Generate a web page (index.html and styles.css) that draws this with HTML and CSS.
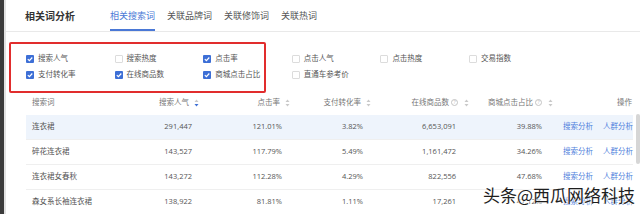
FILE: index.html
```html
<!DOCTYPE html>
<html lang="zh-CN">
<head>
<meta charset="utf-8">
<title>相关词分析</title>
<link rel="stylesheet" href="styles.css">
</head>
<body>
<div class="shell">
  <div class="rail"></div>
  <main class="page">
    <header class="topbar">
      <h1 class="title">相关词分析</h1>
      <nav class="tabs">
        <a class="tab active">相关搜索词</a>
        <a class="tab">关联品牌词</a>
        <a class="tab">关联修饰词</a>
        <a class="tab">关联热词</a>
      </nav>
    </header>

    <section class="filters">
      <label class="opt"><span class="cb on"><svg viewBox="0 0 8 8"><path d="M1.8 4.1 3.4 5.6 6.3 2.5"/></svg></span>搜索人气</label>
      <label class="opt"><span class="cb"></span>搜索热度</label>
      <label class="opt"><span class="cb on"><svg viewBox="0 0 8 8"><path d="M1.8 4.1 3.4 5.6 6.3 2.5"/></svg></span>点击率</label>
      <label class="opt"><span class="cb"></span>点击人气</label>
      <label class="opt"><span class="cb"></span>点击热度</label>
      <label class="opt"><span class="cb"></span>交易指数</label>
      <label class="opt"><span class="cb on"><svg viewBox="0 0 8 8"><path d="M1.8 4.1 3.4 5.6 6.3 2.5"/></svg></span>支付转化率</label>
      <label class="opt"><span class="cb on"><svg viewBox="0 0 8 8"><path d="M1.8 4.1 3.4 5.6 6.3 2.5"/></svg></span>在线商品数</label>
      <label class="opt"><span class="cb on"><svg viewBox="0 0 8 8"><path d="M1.8 4.1 3.4 5.6 6.3 2.5"/></svg></span>商城点击占比</label>
      <label class="opt"><span class="cb"></span>直通车参考价</label>
    </section>

    <div class="table">
      <div class="row head">
        <div class="hc first">搜索词</div>
        <div class="hc">搜索人气<svg class="sort" viewBox="0 0 5 8"><path class="up" d="M2.5 0.5 4.5 3H0.5Z"/><path class="dn active" d="M2.5 7.5 4.5 5H0.5Z"/></svg></div>
        <div class="hc">点击率<svg class="sort" viewBox="0 0 5 8"><path class="up" d="M2.5 0.5 4.5 3H0.5Z"/><path class="dn" d="M2.5 7.5 4.5 5H0.5Z"/></svg></div>
        <div class="hc">支付转化率<svg class="sort" viewBox="0 0 5 8"><path class="up" d="M2.5 0.5 4.5 3H0.5Z"/><path class="dn" d="M2.5 7.5 4.5 5H0.5Z"/></svg></div>
        <div class="hc">在线商品数<span class="help">?</span><svg class="sort" viewBox="0 0 5 8"><path class="up" d="M2.5 0.5 4.5 3H0.5Z"/><path class="dn" d="M2.5 7.5 4.5 5H0.5Z"/></svg></div>
        <div class="hc">商城点击占比<span class="help">?</span><svg class="sort" viewBox="0 0 5 8"><path class="up" d="M2.5 0.5 4.5 3H0.5Z"/><path class="dn" d="M2.5 7.5 4.5 5H0.5Z"/></svg></div>
        <div class="hc">操作</div>
      </div>

      <div class="row hl">
        <div class="c first">连衣裙</div>
        <div class="c v2">291,447</div>
        <div class="c v3">121.01%</div>
        <div class="c v4">3.82%</div>
        <div class="c v5">6,653,091</div>
        <div class="c v6">39.88%</div>
        <div class="c ops"><a>搜索分析</a><a>人群分析</a></div>
      </div>
      <div class="row">
        <div class="c first">碎花连衣裙</div>
        <div class="c v2">143,527</div>
        <div class="c v3">117.79%</div>
        <div class="c v4">5.49%</div>
        <div class="c v5">1,161,472</div>
        <div class="c v6">34.26%</div>
        <div class="c ops"><a>搜索分析</a><a>人群分析</a></div>
      </div>
      <div class="row">
        <div class="c first">连衣裙女春秋</div>
        <div class="c v2">143,272</div>
        <div class="c v3">112.28%</div>
        <div class="c v4">4.29%</div>
        <div class="c v5">822,556</div>
        <div class="c v6">47.68%</div>
        <div class="c ops"><a>搜索分析</a><a>人群分析</a></div>
      </div>
      <div class="row">
        <div class="c first">森女系长袖连衣裙</div>
        <div class="c v2">138,922</div>
        <div class="c v3">81.81%</div>
        <div class="c v4">1.11%</div>
        <div class="c v5">17,261</div>
        <div class="c v6">47.12%</div>
        <div class="c ops"><a>搜索分析</a><a>人群分析</a></div>
      </div>
    </div>
  </main>
</div>
<div class="mark"></div>
<div class="scrollthumb"></div>
<div class="wm">头条@西瓜网络科技</div>
</body>
</html>
```

FILE: styles.css
```css
* { box-sizing: border-box; margin: 0; padding: 0; }

html, body {
  width: 640px;
  height: 214px;
  overflow: hidden;
  background: #ffffff;
}

body {
  position: relative;
  font-family: "Open Sans", "Noto Sans CJK SC", sans-serif;
  font-size: 7.5px;
  line-height: 1;
  color: #555;
}

.shell {
  display: flex;
  height: 214px;
}

.rail {
  width: 4px;
  flex: none;
  background: #3b3b3b;
}

.page {
  flex: 1;
  border-left: 2px solid #e2e2e2;
  background: #fff;
}

/* top bar */
.topbar {
  display: flex;
  align-items: stretch;
  height: 32px;
  border-bottom: 1px solid #e9e9e9;
  padding-left: 19px;
}

.title {
  display: flex;
  align-items: center;
  font-size: 10px;
  font-weight: 700;
  color: #333;
  margin-right: 35px;
  padding-top: 1px;
}

.tabs {
  display: flex;
  gap: 12px;
}

.tab {
  display: flex;
  align-items: center;
  font-size: 9px;
  color: #555;
  border-bottom: 2px solid transparent;
  padding-top: 2px;
}

.tab.active {
  color: #4a78d6;
  border-bottom-color: #4a78d6;
}

/* filters */
.filters {
  display: grid;
  grid-template-columns: repeat(6, 88.6px);
  grid-auto-rows: 16px;
  padding: 19px 0 7px 20px;
}

.opt {
  display: flex;
  align-items: center;
  color: #555;
}

.cb {
  width: 8px;
  height: 8px;
  flex: none;
  margin-right: 4px;
  border: 1px solid #dcdcdc;
  border-radius: 1px;
  background: #fff;
}

.cb.on {
  border: none;
  background: #3d6fd6;
}

.cb svg {
  display: block;
  width: 8px;
  height: 8px;
  fill: none;
  stroke: #fff;
  stroke-width: 1.2;
}

/* table */
.table {
  width: 607px;
  margin-left: 20px;
}

.row {
  display: grid;
  grid-template-columns: 124px 50px 91px 81px 98px 84px 79px;
  height: 25px;
  align-items: center;
  border-bottom: 1px solid #efefef;
}

.row.head {
  border-bottom: none;
  color: #777;
}

.row.hl {
  background: #eef4fc;
}

.hc {
  display: flex;
  align-items: center;
  justify-content: flex-end;
  padding-right: 1px;
}

.hc.first, .c.first {
  justify-content: flex-start;
  text-align: left;
  padding-left: 6px;
}

.sort {
  width: 5px;
  height: 8px;
  margin-left: 5px;
}

.sort path { fill: #c9c9c9; }
.sort path.active { fill: #3d6fd6; }
.sort .up.faint { fill: #dcdcdc; }

.help {
  display: inline-flex;
  align-items: center;
  justify-content: center;
  width: 7px;
  height: 7px;
  margin-left: 2px;
  border: 0.8px solid #c4c4c4;
  border-radius: 50%;
  font-size: 5px;
  color: #bbb;
}

.help + .sort { margin-left: 6px; }

.c {
  text-align: right;
  color: #555;
}

.c.v2 { padding-right: 8px; }
.c.v3 { padding-right: 9px; }
.c.v4 { padding-right: 9px; }
.c.v5 { padding-right: 14px; }
.c.v6 { padding-right: 12px; }

.c.ops {
  display: flex;
  justify-content: flex-end;
  gap: 10px;
}

.c.ops a {
  color: #4f7fdc;
}

/* overlays */
.mark {
  position: absolute;
  left: 9px;
  top: 42px;
  width: 257px;
  height: 51px;
  border: 2px solid #e12d2d;
  border-radius: 2px;
}

.scrollthumb {
  position: absolute;
  left: 636px;
  top: 114px;
  width: 4px;
  height: 50px;
  background: #d6d6d6;
  border-radius: 2px;
}

.wm {
  position: absolute;
  left: 483px;
  top: 186px;
  font-family: "Noto Sans CJK SC", sans-serif;
  font-size: 17px;
  line-height: 1;
  color: #1e1e1e;
  white-space: nowrap;
  text-shadow: 0 0 2px #fff, 0 0 2px #fff, 0 0 1px #fff;
}
```
